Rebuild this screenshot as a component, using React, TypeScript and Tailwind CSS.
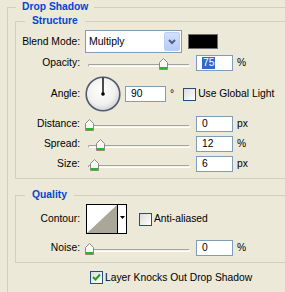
import React from 'react';

const font = "font-['Liberation_Sans',Arial,sans-serif] text-[10.3px] text-black";

function Thumb() {
	return (
		<svg width="9" height="12" viewBox="0 0 9 12">
			<path d="M4.5 0.5 L8.5 4.5 L8.5 11.5 L0.5 11.5 L0.5 4.5 Z" fill="#f7f7f3" stroke="#8c8b80" />
			<rect x="1" y="9" width="7" height="2" fill="#2fb12f" />
		</svg>
	);
}

function Slider({ pos }: { pos: number }) {
	return (
		<div className="relative ml-[4px] h-[16px] w-[108px]">
			<div className="absolute left-[4px] right-[2px] top-[9px] h-[3px] rounded-[2px] border border-t-[#a4a296] border-l-[#a4a296] border-b-white border-r-white bg-[#f4f3ee]" />
			<div className="absolute top-[3px]" style={{ left: pos }}>
				<Thumb />
			</div>
		</div>
	);
}

function Field({ value, selected, width = 37 }: { value: string; selected?: boolean; width?: number }) {
	return (
		<div
			className="flex h-[16px] items-center border border-[#7F9DB9] bg-white pl-[5px]"
			style={{ width }}
		>
			{selected ? <span className="bg-[#316AC5] px-px leading-[12px] text-white">{value}</span> : <span>{value}</span>}
		</div>
	);
}

function Check({ checked }: { checked?: boolean }) {
	return (
		<span className="flex h-[13px] w-[13px] shrink-0 items-center justify-center border border-[#1C5180] bg-gradient-to-br from-[#dcdcd7] to-white">
			{checked && (
				<svg width="9" height="9" viewBox="0 0 9 9">
					<path d="M1 4 L3.5 6.5 L8 1.5" fill="none" stroke="#21A121" strokeWidth="2" />
				</svg>
			)}
		</span>
	);
}

function Label({ children }: { children: React.ReactNode }) {
	return <div className="w-[64px] shrink-0 text-right">{children}</div>;
}

function SliderRow({ label, pos, value, unit, selected, className }: { label: string; pos: number; value: string; unit: string; selected?: boolean; className?: string }) {
	return (
		<div className={'flex h-[16px] items-center ' + (className || '')}>
			<Label>{label}</Label>
			<Slider pos={pos} />
			<div className="ml-[4px]">
				<Field value={value} selected={selected} />
			</div>
			<span className="ml-[4px]">{unit}</span>
		</div>
	);
}

export default function App() {
	return (
		<div className={'h-[292px] w-[285px] overflow-hidden bg-[#ECE9D8] ' + font}>
			<fieldset className="ml-[7px] w-[300px] border border-[#D0D0BF] pb-[20px]">
				<legend className="ml-[8px] px-[6px] font-bold leading-[14px] text-[#0046D5]">Drop Shadow</legend>

				{/* structure */}
				<fieldset className="ml-[7px] border border-[#D0D0BF] pb-[6px]">
					<legend className="ml-[9px] px-[7px] font-bold leading-[14px] text-[#0046D5]">Structure</legend>

					<div className="mt-[2px] flex h-[23px] items-center">
						<Label>Blend Mode:</Label>
						<div className="ml-[5px] flex h-[23px] w-[97px] items-center border border-[#7F9DB9] bg-white p-px">
							<span className="flex-1 pl-[2px] text-[10.5px]">Multiply</span>
							<span className="flex h-full w-[16px] items-center justify-center rounded-[2px] border border-[#b9cdf8] bg-gradient-to-b from-[#d3e0fd] to-[#b6cbf7]">
								<svg width="8" height="6" viewBox="0 0 8 6">
									<path d="M1 1 L4 4 L7 1" fill="none" stroke="#4D6185" strokeWidth="2" />
								</svg>
							</span>
						</div>
						<div className="ml-[6px] h-[15px] w-[30px] border border-[#6f6f6f] bg-black" />
					</div>

					<SliderRow label="Opacity:" pos={75} value="75" unit="%" selected className="mt-[2px]" />

					<div className="mt-[5px] flex h-[36px] items-center">
						<Label>Angle:</Label>
						<svg className="ml-[5px]" width="36" height="36" viewBox="0 0 36 36">
							<defs>
								<radialGradient id="dial" cx="45%" cy="40%" r="60%">
									<stop offset="0%" stopColor="#ffffff" />
									<stop offset="70%" stopColor="#f0f0ee" />
									<stop offset="100%" stopColor="#d2d2da" />
								</radialGradient>
							</defs>
							<circle cx="18" cy="18" r="16.8" fill="url(#dial)" stroke="#525a6e" strokeWidth="1.6" />
							<line x1="18" y1="18" x2="18" y2="1.8" stroke="#000" strokeWidth="1.4" />
							<circle cx="18" cy="18" r="1.8" fill="#000" />
						</svg>
						<div className="ml-[4px]">
							<Field value="90" width={41} />
						</div>
						<span className="ml-[4px] self-start pt-[10px]">°</span>
						<div className="ml-[9px] flex items-center">
							<Check />
							<span className="ml-[2px]">Use Global Light</span>
						</div>
					</div>

					<SliderRow label="Distance:" pos={1} value="0" unit="px" className="mt-[4px]" />
					<SliderRow label="Spread:" pos={12} value="12" unit="%" className="mt-[4px]" />
					<SliderRow label="Size:" pos={6} value="6" unit="px" className="mt-[4px]" />
				</fieldset>

				{/* quality */}
				<fieldset className="ml-[7px] mt-[9px] border border-[#D0D0BF] pb-[6px]">
					<legend className="ml-[9px] px-[7px] font-bold leading-[14px] text-[#0046D5]">Quality</legend>

					<div className="mt-[2px] flex h-[30px] items-center">
						<Label>Contour:</Label>
						<div className="ml-[6px] flex h-[30px] w-[41px] border border-black bg-white">
							<svg width="30" height="28" viewBox="0 0 30 28">
								<polygon points="0,28 30,0 30,28" fill="#aaa698" />
							</svg>
							<div className="flex w-[9px] justify-center border-l border-black pt-[11px]">
								<svg width="5" height="3" viewBox="0 0 5 3">
									<polygon points="0,0 5,0 2.5,3" fill="#000" />
								</svg>
							</div>
						</div>
						<div className="ml-[12px] flex items-center">
							<Check />
							<span className="ml-[2px]">Anti-aliased</span>
						</div>
					</div>

					<SliderRow label="Noise:" pos={1} value="0" unit="%" className="mt-[6px]" />
				</fieldset>

				<div className="ml-[82px] mt-[7px] flex items-center">
					<Check checked />
					<span className="ml-[2px]">Layer Knocks Out Drop Shadow</span>
				</div>
			</fieldset>
		</div>
	);
}
